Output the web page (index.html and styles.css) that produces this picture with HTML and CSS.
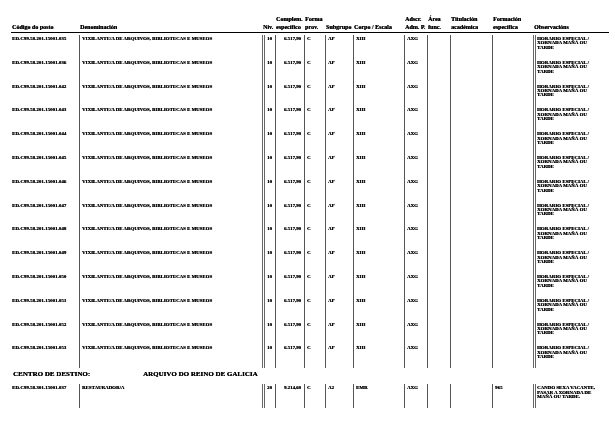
FILE: index.html
```html
<!DOCTYPE html>
<html lang="gl">
<head>
<meta charset="utf-8">
<title>Postos</title>
<link rel="stylesheet" href="styles.css">
</head>
<body>
<div class="page">
  <div class="grid hdr">
    <div class="h">Código do posto</div>
    <div class="h">Denominación</div>
    <div class="h">Niv.</div>
    <div class="h">Complem.<br>específico</div>
    <div class="h">Forma<br>prov.</div>
    <div class="h">Subgrupo</div>
    <div class="h">Corpo / Escala</div>
    <div class="h">Adscr.<br>Adm. P.</div>
    <div class="h">Área<br>func.</div>
    <div class="h">Titulación<br>académica</div>
    <div class="h">Formación<br>específica</div>
    <div class="h">Observacións</div>
  </div>

  <div class="tbl">
    <div class="grid row"><div class="c code">ED.C99.58.201.15001.035</div><div class="c">VIXILANTE/A DE ARQUIVOS, BIBLIOTECAS E MUSEOS</div><div class="c niv">10</div><div class="c num">6.517,90</div><div class="c">C</div><div class="c">AP</div><div class="c">XIII</div><div class="c">AXG</div><div class="c"></div><div class="c"></div><div class="c"></div><div class="c obs">HORARIO ESPECIAL /<br>XORNADA MAÑÁ OU<br>TARDE</div></div>
    <div class="grid row"><div class="c code">ED.C99.58.201.15001.036</div><div class="c">VIXILANTE/A DE ARQUIVOS, BIBLIOTECAS E MUSEOS</div><div class="c niv">10</div><div class="c num">6.517,90</div><div class="c">C</div><div class="c">AP</div><div class="c">XIII</div><div class="c">AXG</div><div class="c"></div><div class="c"></div><div class="c"></div><div class="c obs">HORARIO ESPECIAL /<br>XORNADA MAÑÁ OU<br>TARDE</div></div>
    <div class="grid row"><div class="c code">ED.C99.58.201.15001.042</div><div class="c">VIXILANTE/A DE ARQUIVOS, BIBLIOTECAS E MUSEOS</div><div class="c niv">10</div><div class="c num">6.517,90</div><div class="c">C</div><div class="c">AP</div><div class="c">XIII</div><div class="c">AXG</div><div class="c"></div><div class="c"></div><div class="c"></div><div class="c obs">HORARIO ESPECIAL /<br>XORNADA MAÑÁ OU<br>TARDE</div></div>
    <div class="grid row"><div class="c code">ED.C99.58.201.15001.043</div><div class="c">VIXILANTE/A DE ARQUIVOS, BIBLIOTECAS E MUSEOS</div><div class="c niv">10</div><div class="c num">6.517,90</div><div class="c">C</div><div class="c">AP</div><div class="c">XIII</div><div class="c">AXG</div><div class="c"></div><div class="c"></div><div class="c"></div><div class="c obs">HORARIO ESPECIAL /<br>XORNADA MAÑÁ OU<br>TARDE</div></div>
    <div class="grid row"><div class="c code">ED.C99.58.201.15001.044</div><div class="c">VIXILANTE/A DE ARQUIVOS, BIBLIOTECAS E MUSEOS</div><div class="c niv">10</div><div class="c num">6.517,90</div><div class="c">C</div><div class="c">AP</div><div class="c">XIII</div><div class="c">AXG</div><div class="c"></div><div class="c"></div><div class="c"></div><div class="c obs">HORARIO ESPECIAL /<br>XORNADA MAÑÁ OU<br>TARDE</div></div>
    <div class="grid row"><div class="c code">ED.C99.58.201.15001.045</div><div class="c">VIXILANTE/A DE ARQUIVOS, BIBLIOTECAS E MUSEOS</div><div class="c niv">10</div><div class="c num">6.517,90</div><div class="c">C</div><div class="c">AP</div><div class="c">XIII</div><div class="c">AXG</div><div class="c"></div><div class="c"></div><div class="c"></div><div class="c obs">HORARIO ESPECIAL /<br>XORNADA MAÑÁ OU<br>TARDE</div></div>
    <div class="grid row"><div class="c code">ED.C99.58.201.15001.046</div><div class="c">VIXILANTE/A DE ARQUIVOS, BIBLIOTECAS E MUSEOS</div><div class="c niv">10</div><div class="c num">6.517,90</div><div class="c">C</div><div class="c">AP</div><div class="c">XIII</div><div class="c">AXG</div><div class="c"></div><div class="c"></div><div class="c"></div><div class="c obs">HORARIO ESPECIAL /<br>XORNADA MAÑÁ OU<br>TARDE</div></div>
    <div class="grid row"><div class="c code">ED.C99.58.201.15001.047</div><div class="c">VIXILANTE/A DE ARQUIVOS, BIBLIOTECAS E MUSEOS</div><div class="c niv">10</div><div class="c num">6.517,90</div><div class="c">C</div><div class="c">AP</div><div class="c">XIII</div><div class="c">AXG</div><div class="c"></div><div class="c"></div><div class="c"></div><div class="c obs">HORARIO ESPECIAL /<br>XORNADA MAÑÁ OU<br>TARDE</div></div>
    <div class="grid row"><div class="c code">ED.C99.58.201.15001.048</div><div class="c">VIXILANTE/A DE ARQUIVOS, BIBLIOTECAS E MUSEOS</div><div class="c niv">10</div><div class="c num">6.517,90</div><div class="c">C</div><div class="c">AP</div><div class="c">XIII</div><div class="c">AXG</div><div class="c"></div><div class="c"></div><div class="c"></div><div class="c obs">HORARIO ESPECIAL /<br>XORNADA MAÑÁ OU<br>TARDE</div></div>
    <div class="grid row"><div class="c code">ED.C99.58.201.15001.049</div><div class="c">VIXILANTE/A DE ARQUIVOS, BIBLIOTECAS E MUSEOS</div><div class="c niv">10</div><div class="c num">6.517,90</div><div class="c">C</div><div class="c">AP</div><div class="c">XIII</div><div class="c">AXG</div><div class="c"></div><div class="c"></div><div class="c"></div><div class="c obs">HORARIO ESPECIAL /<br>XORNADA MAÑÁ OU<br>TARDE</div></div>
    <div class="grid row"><div class="c code">ED.C99.58.201.15001.050</div><div class="c">VIXILANTE/A DE ARQUIVOS, BIBLIOTECAS E MUSEOS</div><div class="c niv">10</div><div class="c num">6.517,90</div><div class="c">C</div><div class="c">AP</div><div class="c">XIII</div><div class="c">AXG</div><div class="c"></div><div class="c"></div><div class="c"></div><div class="c obs">HORARIO ESPECIAL /<br>XORNADA MAÑÁ OU<br>TARDE</div></div>
    <div class="grid row"><div class="c code">ED.C99.58.201.15001.051</div><div class="c">VIXILANTE/A DE ARQUIVOS, BIBLIOTECAS E MUSEOS</div><div class="c niv">10</div><div class="c num">6.517,90</div><div class="c">C</div><div class="c">AP</div><div class="c">XIII</div><div class="c">AXG</div><div class="c"></div><div class="c"></div><div class="c"></div><div class="c obs">HORARIO ESPECIAL /<br>XORNADA MAÑÁ OU<br>TARDE</div></div>
    <div class="grid row"><div class="c code">ED.C99.58.201.15001.052</div><div class="c">VIXILANTE/A DE ARQUIVOS, BIBLIOTECAS E MUSEOS</div><div class="c niv">10</div><div class="c num">6.517,90</div><div class="c">C</div><div class="c">AP</div><div class="c">XIII</div><div class="c">AXG</div><div class="c"></div><div class="c"></div><div class="c"></div><div class="c obs">HORARIO ESPECIAL /<br>XORNADA MAÑÁ OU<br>TARDE</div></div>
    <div class="grid row"><div class="c code">ED.C99.58.201.15001.053</div><div class="c">VIXILANTE/A DE ARQUIVOS, BIBLIOTECAS E MUSEOS</div><div class="c niv">10</div><div class="c num">6.517,90</div><div class="c">C</div><div class="c">AP</div><div class="c">XIII</div><div class="c">AXG</div><div class="c"></div><div class="c"></div><div class="c"></div><div class="c obs">HORARIO ESPECIAL /<br>XORNADA MAÑÁ OU<br>TARDE</div></div>
  </div>

  <div class="centro">
    <span class="centro-label">CENTRO DE DESTINO:</span>
    <span class="centro-name">ARQUIVO DO REINO DE GALICIA</span>
  </div>

  <div class="tbl tbl2">
    <div class="grid row row2"><div class="c code">ED.C99.58.301.15001.037</div><div class="c">RESTAURADOR/A</div><div class="c niv">20</div><div class="c num">9.214,60</div><div class="c">C</div><div class="c">A2</div><div class="c">EMR</div><div class="c">AXG</div><div class="c"></div><div class="c"></div><div class="c">965</div><div class="c obs">CANDO SEXA VACANTE,<br>PASAR A XORNADA DE<br>MAÑÁ OU TARDE.</div></div>
  </div>
</div>
</body>
</html>
```

FILE: styles.css
```css
html, body {
  margin: 0;
  padding: 0;
  background: #ffffff;
}

body {
  font-family: "Liberation Serif", "Times New Roman", serif;
  font-weight: bold;
  color: #000;
}

.page {
  padding: 15px 6px 0 11px;
  width: 598px;
  will-change: transform;
}

.grid {
  display: grid;
  grid-template-columns: 68px 183px 13px 29px 21px 28px 51px 23px 23px 42px 41px 76px;
}

.hdr {
  border-bottom: 1px solid #000;
  align-items: end;
  padding-bottom: 1px;
}

.h {
  font-size: 6px;
  line-height: 8px;
  padding-left: 1px;
  white-space: nowrap;
  text-shadow: 0.3px 0 0 #000;
}

.tbl {
  margin-top: 2px;
}

.row {
  height: 23.8px;
}

.c {
  font-size: 4.9px;
  line-height: 4.4px;
  padding: 2px 0 0 2px;
  white-space: nowrap;
  border-left: 1px solid #555;
  text-shadow: 0.3px 0 0 #000;
}

.c.code {
  border-left: none;
  padding-left: 1px;
  font-size: 5px;
}

.c.niv {
  border-left: 3px double #666;
  padding-left: 2px;
}

.c.num {
  text-align: right;
  padding-right: 3px;
  padding-left: 0;
}

.c.obs {
  border-left: 3px double #666;
  padding-left: 1px;
}

.centro {
  display: flex;
  font-size: 7px;
  line-height: 9px;
  height: 13px;
  padding-top: 2px;
  box-sizing: border-box;
  padding-left: 2px;
  text-shadow: 0.2px 0 0 #000;
}

.centro-label {
  width: 130px;
}

.tbl2 {
  margin-top: 3px;
}

.row2 {
  height: 24px;
}
```
